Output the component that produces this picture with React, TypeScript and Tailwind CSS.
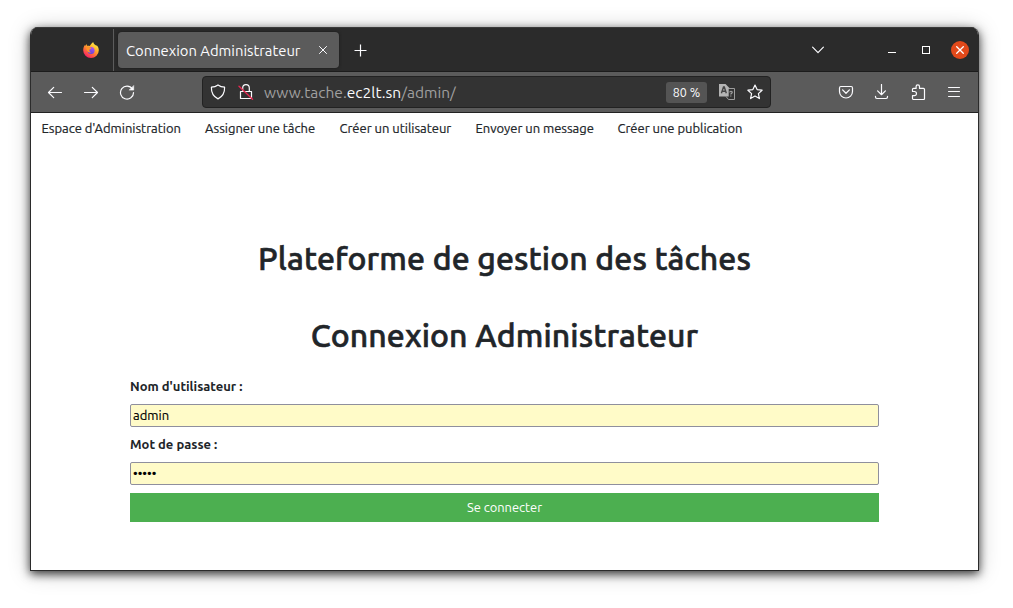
import React from "react";

const line = {
  fill: "none",
  stroke: "#fbfbfe",
  strokeWidth: 1.2,
  strokeLinecap: "round" as const,
  strokeLinejoin: "round" as const,
};

function Icon({ className = "", children }: { className?: string; children: React.ReactNode }) {
  return (
    <svg className={`block h-4 w-4 shrink-0 ${className}`} viewBox="0 0 16 16" {...line}>
      {children}
    </svg>
  );
}

function Firefox() {
  return (
    <svg className="ml-[52px] block h-4 w-4 shrink-0" viewBox="0 0 16 16">
      <defs>
        <linearGradient id="flame" x1="0.85" y1="0.05" x2="0.25" y2="1">
          <stop offset="0" stopColor="#fff44f" />
          <stop offset="0.35" stopColor="#ffb42b" />
          <stop offset="0.65" stopColor="#ff6a3a" />
          <stop offset="1" stopColor="#f5156c" />
        </linearGradient>
        <linearGradient id="globe" x1="0.7" y1="0" x2="0.3" y2="1">
          <stop offset="0" stopColor="#b055f0" />
          <stop offset="1" stopColor="#5b42d8" />
        </linearGradient>
      </defs>
      <path
        fill="url(#flame)"
        d="M10.2 0c.2 1.500 1.100 2.100 2.200 3.100.5.4.8.8 1 1.200.1-.4 0-.9-.1-1.200 1.600 1.300 2.500 3.100 2.500 5.100A7.800 7.800 0 0 1 8 16 7.800 7.800 0 0 1 .2 8.200c0-2.200.7-4 1.700-5.300 0 .5.1.9.2 1.200.3-.8.8-1.500 1.500-2 0 .7.2 1.300.5 1.700.8-.2 1.800-.1 2.600.3C7.700 2.800 8.500 1 10.200 0z"
      />
      <circle cx="8.100" cy="8.500" r="3.500" fill="url(#globe)" />
      <path fill="#ff9526" d="M3.200 5.300c1.300-.8 2.700-.6 3.600.2.700 0 1.400.2 1.500.7 0 .7-1.700.9-2 1.600-.3 1.200.5 2.300 2 2.400-1.700 1.100-4.600.2-5.100-4.900z" />
    </svg>
  );
}

function TabStrip() {
  return (
    <div className="flex h-[45px] items-center border-b border-[#1c1c1c] bg-[#2b2b2b] pt-[2px] shadow-[inset_0_1px_0_#3b3b3b]">
      <Firefox />
      <div className="ml-[14px] h-full w-px bg-[#5c5c5c]" />
      <div className="ml-1 flex h-9 w-[221px] items-center rounded bg-[#5b5b5b] pl-2 shadow-[0_0_3px_#181818]">
        <span className="w-[193px] whitespace-nowrap pt-[2px] text-[14.800px] text-[#fbfbfe]">Connexion Administrateur</span>
        <svg className="h-2 w-2" viewBox="0 0 8 8" stroke="#fbfbfe" strokeWidth="1">
          <path d="M.2.2l7.600 7.600M7.800.2L.2 7.800" />
        </svg>
      </div>
      <svg className="ml-[15px] mt-px h-[13px] w-[13px]" viewBox="0 0 13 13" stroke="#fbfbfe" strokeWidth="1.200">
        <path d="M6.500.5v12M.5 6.500h12" />
      </svg>
      <div className="flex-1" />
      <svg className="mr-16 h-3 w-3" viewBox="0 0 12 12" {...line}>
        <path d="M.6 3.200L6 8.700l5.400-5.500" />
      </svg>
      <div className="mr-[26px] mt-[5px] h-px w-2 bg-white" />
      <div className="mr-[21px] h-2 w-2 border border-white" />
      <div className="mr-[9px] flex h-[18px] w-[18px] items-center justify-center rounded-full bg-[#e2491a]">
        <svg className="h-2 w-2" viewBox="0 0 8 8" stroke="#fff" strokeWidth="1.300">
          <path d="M.3.3l7.400 7.400M7.700.3L.3 7.700" />
        </svg>
      </div>
    </div>
  );
}

function Toolbar() {
  return (
    <div className="flex h-[41px] items-center border-b border-[#222] bg-[#5b5b5b]">
      <Icon className="ml-4">
        <path d="M14.500 8.500h-13M6.700 3.300L1.500 8.500l5.200 5.200" />
      </Icon>
      <Icon className="ml-5">
        <path d="M1.500 8.500h13M9.300 3.300l5.200 5.200-5.200 5.200" />
      </Icon>
      <Icon className="ml-5">
        <path d="M13.400 5A6.500 6.500 0 1 0 14.500 8.500" />
        <path d="M14.700 1.900v4.200h-4.200z" fill="#fbfbfe" strokeWidth=".6" />
      </Icon>
      <div className="ml-[67px] flex h-8 w-[569px] items-center rounded border border-[#222] bg-[#333]">
        <Icon className="ml-[7px]">
          <path d="M8 .9c2 1.400 4.300 2.100 6.600 2.300.2 4.800-1.500 9-6.600 11.700C2.900 12.200 1.200 8 1.400 3.200 3.700 3 6 2.300 8 .9z" />
        </Icon>
        <Icon className="ml-3">
          <path d="M2.500 7.500h11v7h-11zM4.700 7.300V4a3.300 3.300 0 0 1 6.600 0v3.300" />
          <path d="M1 2.300l13.500 13" stroke="#e22850" strokeWidth="1.400" />
        </Icon>
        <span className="ml-[10px] w-[402px] whitespace-nowrap pt-px text-[15.500px] tracking-[0.03px] text-[#a0a0a0]">
          www.tache.<span className="text-[#fbfbfe]">ec2lt.sn</span>/admin/
        </span>
        <span className="flex h-[21px] w-[41px] shrink-0 items-center justify-center whitespace-nowrap rounded-[3px] bg-[#545454] text-[12.500px] text-[#fbfbfe]">
          80 %
        </span>
        <svg className="ml-3 block h-4 w-4 shrink-0" viewBox="0 0 16 16" fill="none">
          <path d="M7 4.500h8.500v11H9.500L7 12.500" stroke="#9c9c9c" strokeWidth="1" />
          <path d="M0 0h6.500l3.200 3.200V12.500H0z" fill="#b4b4b4" />
          <path d="M2.400 9.200L4.500 3h.8l2 6.200M3.100 7.200h3.500" stroke="#444" strokeWidth="1.400" />
          <path d="M10.700 8.300c.2-1.500 2.700-1.300 2.500.1-.1.900-1.400.9-1.400 2.100m0 1v1" stroke="#a5a5a5" strokeWidth="1.200" />
        </svg>
        <Icon className="ml-3">
          <path d="M8 1l2.100 4.600 5 .6-3.700 3.400 1 5L8 12.100l-4.400 2.500 1-5L.9 6.200l5-.6z" />
        </Icon>
      </div>
      <div className="flex-1" />
      <Icon className="mr-5">
        <path d="M2.900 2.500h10.200c.8 0 1.400.6 1.400 1.400v3.600a6.500 6.500 0 0 1-13 0V3.900c0-.8.6-1.400 1.400-1.400z" />
        <path d="M4.600 5.900L8 9.200l3.400-3.300" strokeWidth="1.300" />
      </Icon>
      <Icon className="mr-5">
        <path d="M7.500.5v10.200M3.600 6.900l3.900 3.800 3.900-3.800M1.500 12.300v.8c0 .8.600 1.400 1.400 1.400h9.200c.8 0 1.400-.6 1.400-1.400v-.8" />
      </Icon>
      <Icon className="mr-5">
        <path d="M2.500 7.500V5.300c0-.5.400-.9 1-.9h2.600V2.500a1.700 1.700 0 0 1 3.400 0v1.900h4c.6 0 1 .4 1 1v9.100c0 .5-.4 1-1 1h-10c-.6 0-1-.5-1-1v-2.800h1.900a1.600 1.600 0 0 0 0-4.200z" />
      </Icon>
      <Icon className="mr-4">
        <path d="M2.500 3.500h11M2.500 7.500h11M2.500 12.500h11" strokeWidth="1" />
      </Icon>
    </div>
  );
}

function NavBar() {
  return (
    <nav className="flex h-[31px] items-center whitespace-nowrap pl-[10.500px] text-[13px] tracking-[-0.02px] text-[#212529] [-webkit-text-stroke:0.2px_#212529]">
      <a className="w-[163.500px]">Espace d'Administration</a>
      <a className="w-[134.500px]">Assigner une tâche</a>
      <a className="w-[136px]">Créer un utilisateur</a>
      <a className="w-[142px]">Envoyer un message</a>
      <a>Créer une publication</a>
    </nav>
  );
}

const field =
  "block h-[23px] w-full rounded-[2px] border border-[#8f8f9d] bg-[#fffbc8] px-[2px] pb-px text-[13px] text-black outline-none [-webkit-text-stroke:0.15px_#000]";

const heading =
  "h-10 whitespace-nowrap text-center text-[32px] font-medium leading-10 tracking-[0.1px] [-webkit-text-stroke:0.6px_#212529]";

export default function App() {
  return (
    <main className="h-[608px] w-[1013px] overflow-hidden bg-white px-[30px] pt-[27px] font-['Ubuntu','Noto_Sans',sans-serif]">
      <div className="h-[544px] w-[949px] rounded-t-lg shadow-[0_3px_10px_rgba(0,0,0,0.75),0_2px_22px_rgba(0,0,0,0.22)]">
        <div className="h-full overflow-hidden rounded-t-lg border-x border-b border-[#2b2b2b] bg-white">
          <TabStrip />
          <Toolbar />
          <NavBar />
          <div className="ml-[99px] w-[749px] text-[#212529]">
            <h1 className={`mt-[94px] ${heading}`}>Plateforme de gestion des tâches</h1>
            <h1 className={`mt-[37px] ${heading}`}>Connexion Administrateur</h1>
            <form className="text-[13px]">
              <label className="mt-[21px] block h-5 font-bold leading-5">Nom d'utilisateur :</label>
              <input className={`mt-2 ${field}`} defaultValue="admin" />
              <label className="mt-[7px] block h-5 font-bold leading-5">Mot de passe :</label>
              <input className={`mt-2 ${field}`} type="password" defaultValue="admin" />
              <button type="button" className="mt-2 block h-[29px] w-full bg-[#4caf50] text-center text-[12.900px] text-white">Se connecter</button>
            </form>
          </div>
        </div>
      </div>
    </main>
  );
}
